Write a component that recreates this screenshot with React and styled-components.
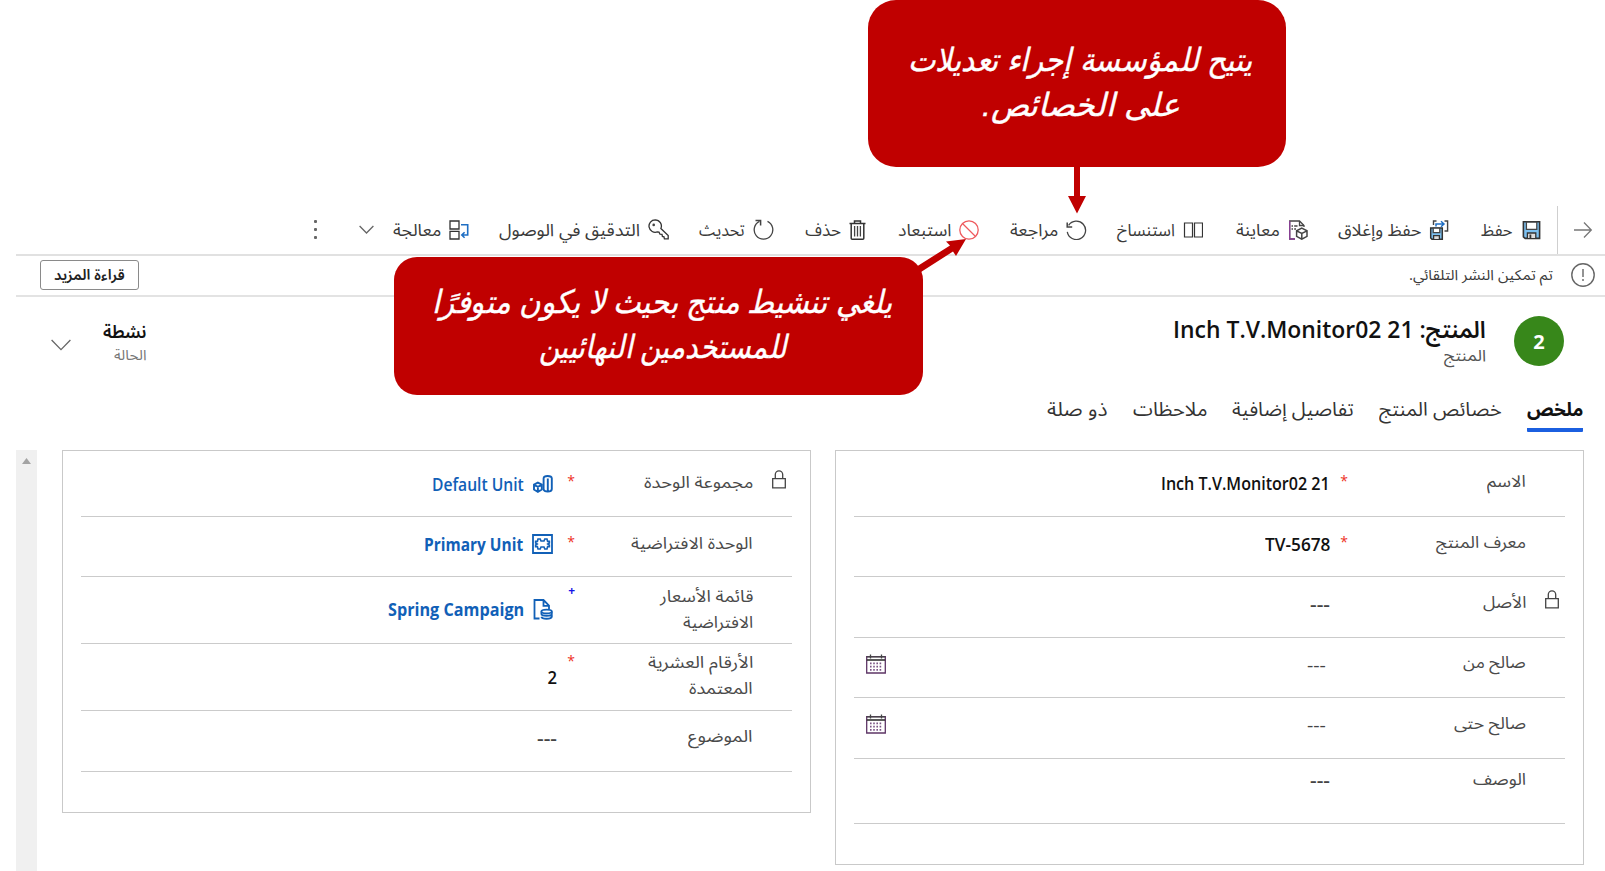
import React, { useLayoutEffect, useRef } from "react";
import styled, { createGlobalStyle } from "styled-components";

const ui = '"Open Sans", "Noto Sans Arabic", "DejaVu Sans Condensed", "DejaVu Sans", sans-serif';
const RED = "#c00000";
const BLUE = "#1160b7";

const Global = createGlobalStyle`
  *, *::before, *::after { box-sizing: border-box; }
  html, body { margin: 0; background: #fff; overflow: hidden; }
  body { font-family: ${ui}; color: #333; }
`;

/* A line of text squeezed or stretched to the width of its slot. */
const FitBox = styled.span`
  display: block;
  flex: none;
  width: ${(p) => p.$w}px;
  height: ${(p) => p.$lh}px;
  line-height: ${(p) => p.$lh}px;
  white-space: nowrap;
  direction: rtl;
`;
const FitInner = styled.span`
  display: inline-block;
  transform-origin: right center;
`;
function Fit({ w, lh = 24, children }) {
  const ref = useRef(null);
  useLayoutEffect(() => {
    const el = ref.current;
    el.style.transform = `scaleX(${w / el.offsetWidth})`;
  }, [w, children]);
  return (
    <FitBox $w={w} $lh={lh}>
      <FitInner ref={ref}>{children}</FitInner>
    </FitBox>
  );
}

const Page = styled.div`
  position: relative;
  direction: rtl;
  width: 1605px;
  height: 871px;
  padding: 206px 0 0 16px;
  overflow: hidden;
  display: flex;
  flex-direction: column;
`;

const Toolbar = styled.div`
  height: 50px;
  flex: none;
  display: flex;
  border-bottom: 2px solid #e1e1e1;
`;
const BackSlot = styled.div`
  width: 48px;
  display: flex;
  align-items: center;
  padding-right: 12px;
  border-left: 1px solid #cfcfcf;
  margin-left: 16px;
`;
const Command = styled.div`
  width: ${(p) => p.$w}px;
  flex: none;
  display: flex;
  align-items: center;
  gap: 8px;
  padding-bottom: 1px;
  font-size: 17px;
  color: #3a3a3a;
`;
const Chevron = styled.div`
  margin-right: 9px;
  display: flex;
`;
const More = styled.div`
  display: flex;
  flex-direction: column;
  justify-content: center;
  gap: 5px;
  padding: 0 1px 2px 0;
`;
const Dot = styled.i`
  width: 3px;
  height: 3px;
  border-radius: 1px;
  background: #666;
`;

const Notice = styled.div`
  height: 41px;
  flex: none;
  display: flex;
  align-items: center;
  padding: 0 10px 2px 24px;
  border-bottom: 2px solid #e3e3e3;
  font-size: 14.5px;
  color: #3a3a3a;
`;
const NoticeText = styled.div`
  margin-right: 18px;
`;
const ReadMore = styled.button`
  margin: 0 auto 0 0;
  width: 99px;
  height: 30px;
  padding: 0 0 0 1px;
  display: flex;
  align-items: center;
  justify-content: center;
  border: 1px solid #8a8a8a;
  border-radius: 3px;
  background: #fff;
  font: 600 14.5px ${ui};
  color: #222;
`;

const Header = styled.div`
  height: 98px;
  flex: none;
  display: flex;
  align-items: flex-start;
  padding: 19px 41px 0 35px;
`;
const Avatar = styled.div`
  width: 50px;
  height: 50px;
  border-radius: 50%;
  background: #37871a;
  color: #fff;
  font-size: 20px;
  font-weight: 700;
  display: flex;
  align-items: center;
  justify-content: center;
`;
const Heading = styled.div`
  margin-right: 28px;
`;
const Title = styled.div`
  margin-top: -1px;
  font-size: 23.5px;
  font-weight: 600;
  color: #111;
`;
const Sub = styled.div`
  font-size: 16px;
  color: #555;
`;
const Status = styled.div`
  margin-right: auto;
  display: flex;
  align-items: flex-start;
  gap: 32px;
`;
const StatusText = styled.div`
  display: flex;
  flex-direction: column;
`;
const StatusValue = styled.div`
  font-size: 18px;
  font-weight: 600;
  color: #111;
`;
const StatusLabel = styled.div`
  display: flex;
  font-size: 14.5px;
  color: #777;
`;
const StatusChevron = styled.div`
  padding-top: 23px;
`;

const Tabs = styled.div`
  height: 55px;
  flex: none;
  display: flex;
  align-items: flex-start;
  gap: 25px;
  padding-right: 22px;
`;
const Tab = styled.div`
  height: 37px;
  font-size: 19px;
  font-weight: ${(p) => (p.$on ? 700 : 400)};
  color: ${(p) => (p.$on ? "#111" : "#333")};
  border-bottom: 4px solid ${(p) => (p.$on ? "#1b5fe0" : "transparent")};
  border-radius: 1px;
`;

const Body = styled.div`
  flex: 1;
  min-height: 0;
  display: flex;
  align-items: flex-start;
  padding-right: 21px;
`;
const Panel = styled.div`
  width: ${(p) => p.$w}px;
  height: ${(p) => p.$h}px;
  flex: none;
  margin-left: ${(p) => p.$ml}px;
  padding: 1px 18px;
  border: 1px solid #c9c9c9;
`;
const Row = styled.div`
  height: ${(p) => p.$h}px;
  display: flex;
  align-items: flex-start;
  border-bottom: 1px solid #cbcbcb;
`;
const LockSlot = styled.div`
  width: 39px;
  flex: none;
  padding: ${(p) => p.$top}px 6px 0 0;
`;
const LabelCell = styled.div`
  width: 178px;
  flex: none;
  padding-top: ${(p) => p.$top - 2}px;
  font-size: 16.5px;
  color: #4a4a4a;
`;
const Mark = styled.div`
  width: 8px;
  flex: none;
  padding-top: ${(p) => p.$top}px;
  font-size: ${(p) => (p.$blue ? 12 : 14)}px;
  font-weight: ${(p) => (p.$blue ? 700 : 400)};
  line-height: 16px;
  color: ${(p) => (p.$blue ? "#1515e8" : "#ee3124")};
`;
const ValueCell = styled.div`
  flex: 1;
  display: flex;
  align-items: center;
  height: 24px;
  margin-top: ${(p) => p.$top - 1}px;
  margin-right: ${(p) => p.$mr}px;
  gap: 9px;
  font-size: 17.5px;
  font-weight: ${(p) => p.$weight || 600};
  color: ${(p) => (p.$link ? BLUE : p.$dash ? "#444" : "#111")};
`;
const End = styled.div`
  margin-right: auto;
  margin-left: 12px;
  padding-bottom: 2px;
  display: flex;
`;
const Scroll = styled.div`
  width: 21px;
  align-self: stretch;
  margin-right: auto;
  background: #f0f0f0;
  display: flex;
  justify-content: center;
  padding-top: 8px;
`;

const Callout = styled.div`
  position: absolute;
  left: ${(p) => p.$x}px;
  top: ${(p) => p.$y}px;
  width: ${(p) => p.$w}px;
  height: ${(p) => p.$h}px;
  padding: ${(p) => p.$pt}px 0 0 ${(p) => p.$pl}px;
  border-radius: ${(p) => p.$r}px;
  background: ${RED};
  color: #fff;
  font: italic 32px "Liberation Sans", "DejaVu Sans", sans-serif;
  -webkit-text-stroke: 0.4px #fff;
  display: flex;
  flex-direction: column;
  align-items: center;
`;
const Arrow = styled.svg`
  position: absolute;
  left: ${(p) => p.$x}px;
  top: ${(p) => p.$y}px;
`;

const IconSvg = styled.svg`
  flex: none;
  display: block;
`;
const Svg = ({ w = 20, h = 20, children, s = "#444", sw = 1.3 }) => (
  <IconSvg width={w} height={h} viewBox={`0 0 ${w} ${h}`} fill="none" stroke={s} strokeWidth={sw}>
    {children}
  </IconSvg>
);

const Icons = {
  save: (
    <Svg>
      <path d="M2.4 1.8H18.6V18.4H4.2L2.4 16.8Z" fill="#7cc0f0" stroke="#333" strokeWidth="1.6" />
      <path d="M5.4 2.2H15.8V9.4H5.4Z" fill="#fff" stroke="#444" />
      <path d="M6.4 18V13H14.8V18" fill="#ddd" stroke="#333" />
      <path d="M9.4 14.5V18" stroke="#333" strokeWidth="1.8" />
    </Svg>
  ),
  saveClose: (
    <Svg>
      <path d="M1.7 8H13.3V19.3H3L1.7 18Z" fill="#7cc0f0" stroke="#333" strokeWidth="1.5" />
      <path d="M4.2 8.2H10.8V12.6H4.2Z" fill="#fff" stroke="#444" />
      <path d="M4.6 19V15.6H10.4V19" fill="#ddd" stroke="#333" />
      <path d="M4.5 5V1H7.5M15.5 1H18.6V11H15.5" stroke="#444" strokeWidth="1.4" />
      <path d="M7 6.6V4H15M12 1.2L15 4L12 6.8" stroke="#1f6fc4" strokeWidth="1.5" />
    </Svg>
  ),
  preview: (
    <Svg>
      <path d="M7 19H1.7V1H11.5L16 5.5V7" stroke="#444" />
      <path d="M1.7 1V19H7" stroke="#8a3f96" />
      <path d="M11.5 1V5.5H16" />
      <path d="M3.5 6H5M6.2 6H9.5M3.5 9H5M6.2 9H8" />
      <path d="M13.8 8.2L19 10.8V16.4L13.8 19.2L8.6 16.4V10.8ZM8.6 10.8L13.8 13.5L19 10.8M13.8 13.5V19" strokeWidth="1.5" />
    </Svg>
  ),
  clone: (
    <Svg>
      <path d="M1.5 3H9.5V17H1.5ZM11.5 3H19.5V17H11.5Z" stroke="#333" strokeWidth="1.2" />
    </Svg>
  ),
  revise: (
    <Svg w={21}>
      <path d="M1.3 11.8A9.2 9.2 0 1 0 2.6 5.4" />
      <path d="M1.2 2.6V7H6.2" strokeWidth="1.5" />
    </Svg>
  ),
  retire: (
    <Svg s="#ee5a5e">
      <circle cx="10" cy="10" r="9.2" />
      <path d="M3.5 3.5L16.5 16.5" />
    </Svg>
  ),
  trash: (
    <Svg w={17}>
      <path d="M.5 3.4H16.5M5.5 3V.9H11.5V3M2.2 3.6V18.3Q2.2 19.2 3.1 19.2H13.9Q14.8 19.2 14.8 18.3V3.6" strokeWidth="1.5" stroke="#333" />
      <path d="M5.6 6V16.5M8.5 6V16.5M11.4 6V16.5" />
    </Svg>
  ),
  refresh: (
    <Svg w={21} h={21}>
      <path d="M14.5 2.4A9.3 9.3 0 1 1 6.5 2.4" />
      <path d="M2.5 1.5H7.6V6.6" strokeWidth="1.5" />
    </Svg>
  ),
  key: (
    <Svg w={21} h={21}>
      <path d="M7.2 .9A6.2 6.2 0 1 0 9.4 12.9L11 13.2L12 15.2L14 15.4L14.4 17.4L16 17.8L16.4 19.8H20.2V16.6L12.9 9.5A6.2 6.2 0 0 0 7.2 .9Z" stroke="#333" />
      <circle cx="5.7" cy="5.9" r="1.3" fill="#444" stroke="none" />
    </Svg>
  ),
  process: (
    <Svg>
      <path d="M1 1H10V9H1ZM1 11.4H10V19H1Z" stroke="#333" />
      <path d="M12 4.8H18.7V15H13.2M15.6 12.2L12.8 15L15.6 17.8" stroke="#1f6fc4" strokeWidth="1.6" />
    </Svg>
  ),
  lock: (
    <Svg w={14} h={19}>
      <path d="M.7 8.6H13.3V17.8H.7ZM3.3 8.6V4.6A3.7 3.7 0 0 1 10.7 4.6V8.6" />
    </Svg>
  ),
  calendar: (
    <Svg h={20}>
      <path d="M.7 2.6H19.3V19H.7Z" stroke="#5d3566" />
      <path d="M.7 6H19.3" stroke="#333" strokeWidth="1.6" />
      <path d="M.7 2.8H19.3M4.5 .4V4.6M15.5 .4V4.6" stroke="#444" />
      <path d="M4 9.3H16.5M4 12.6H16.5M4 15.8H16.5" stroke="#7b5585" strokeWidth="1.8" strokeDasharray="1.6 1.6" />
    </Svg>
  ),
  unitGroup: (
    <Svg s={BLUE} sw={1.9} h={18}>
      <path d="M10.6 3.4Q10.6 1 14.6 1T18.8 3.4V14.2Q18.6 16.6 14.8 16.6T10.6 14.4ZM14.8 3.6V16" />
      <path d="M1 9.6L4.9 7.6L8.8 9.6V14.5L4.9 16.8L1 14.5ZM1 9.8L4.9 11.8L8.8 9.8M4.9 11.8V16" />
    </Svg>
  ),
  unit: (
    <Svg w={21} h={20} s={BLUE} sw={1.8}>
      <path d="M1 1H20V19H1Z" />
      <path d="M6 5H8.2L9 7H12L12.8 5H15L15.6 7.4H17.4V9L15.8 10L17.4 11V12.6H15.6L15 15H12.8L12 13H9L8.2 15H6L5.4 12.6H3.6V11L5.2 10L3.6 9V7.4H5.4Z" strokeWidth="1.6" />
    </Svg>
  ),
  priceList: (
    <Svg h={21} s={BLUE} sw={1.8}>
      <path d="M6.5 19.5H1.5V1H10.5L16 6.5V10M10.5 1V6.8H16" />
      <ellipse cx="13.6" cy="12.5" rx="5.2" ry="1.9" />
      <path d="M8.4 12.5V15C8.4 17.3 18.8 17.3 18.8 15V12.5M8.4 17.8C9 20.4 18.2 20.4 18.8 17.8V15.5" />
    </Svg>
  ),
};

const commands = [
  ["save", "حفظ", 32, 92],
  ["saveClose", "حفظ وإغلاق", 83, 141],
  ["preview", "معاينة", 44, 105],
  ["clone", "استنساخ", 58, 116],
  ["revise", "مراجعة", 48, 108],
  ["retire", "استبعاد", 53, 113],
  ["trash", "حذف", 36, 92],
  ["refresh", "تحديث", 46, 105],
  ["key", "التدقيق في الوصول", 141, 200],
  ["process", "معالجة", 48, 86],
];

const tabs = [
  ["ملخص", 56],
  ["خصائص المنتج", 123],
  ["تفاصيل إضافية", 122],
  ["ملاحظات", 74],
  ["ذو صلة", 61],
];

const mainRows = [
  { h: 65, label: [["الاسم", 39]], lt: 18, req: 1, mt: 21, value: "21 Inch T.V.Monitor02", vw: 169, vt: 20 },
  { h: 60, label: [["معرف المنتج", 90]], lt: 14, req: 1, mt: 17, value: "TV-5678", vw: 65, vt: 16 },
  { h: 61, label: [["الأصل", 43]], lt: 14, lock: 1, kt: 13, value: "---", vw: 20, vt: 16 },
  { h: 60, label: [["صالح من", 63]], lt: 13, value: "---", vw: 19, vt: 16, weight: 400, cal: 1 },
  { h: 61, label: [["صالح حتى", 72]], lt: 14, value: "---", vw: 19, vt: 16, weight: 400, cal: 1 },
  { h: 65, label: [["الوصف", 53]], lt: 9, value: "---", vw: 20, vt: 10 },
];
const sideRows = [
  { h: 65, label: [["مجموعة الوحدة", 109]], lt: 19, lock: 1, kt: 18, req: 1, mt: 21, icon: "unitGroup", value: "Default Unit", vw: 92, vt: 21, link: 1 },
  { h: 60, label: [["الوحدة الافتراضية", 122]], lt: 15, req: 1, mt: 17, icon: "unit", value: "Primary Unit", vw: 99, vt: 16, link: 1, weight: 700 },
  { h: 67, label: [["قائمة الأسعار", 93], ["الافتراضية", 70]], lt: 8, plus: 1, mt: 6, icon: "priceList", value: "Spring Campaign", vw: 136, vt: 21, link: 1, weight: 700 },
  { h: 67, label: [["الأرقام العشرية", 105], ["المعتمدة", 64]], lt: 7, req: 1, mt: 9, value: "2", vw: 9.5, vt: 22 },
  { h: 61, label: [["الموضوع", 65]], lt: 14, value: "---", vw: 20, vt: 16 },
];

function Field({ row }) {
  return (
    <Row $h={row.h}>
      <LockSlot $top={row.kt || 0}>{row.lock ? Icons.lock : null}</LockSlot>
      <LabelCell $top={row.lt}>
        {row.label.map(([t, w]) => (
          <Fit key={t} w={w} lh={26}>{t}</Fit>
        ))}
      </LabelCell>
      <Mark $top={row.mt || 0} $blue={row.plus}>{row.req ? "*" : row.plus ? "+" : ""}</Mark>
      <ValueCell
        $top={row.vt}
        $mr={row.icon || row.cal ? 14 : 10}
        $link={row.link}
        $weight={row.weight}
        $dash={row.value === "---"}
      >
        {row.icon && Icons[row.icon]}
        <Fit w={row.vw}>{row.value}</Fit>
        {row.cal && <End>{Icons.calendar}</End>}
      </ValueCell>
    </Row>
  );
}

export default function App() {
  return (
    <Page>
      <Global />
      <Toolbar>
        <BackSlot>
          <Svg w={20} s="#777"><path d="M1 10H18M11 2.5L18.3 10L11 17.5" /></Svg>
        </BackSlot>
        {commands.map(([icon, label, w, pitch]) => (
          <Command key={icon} $w={pitch}>
            {Icons[icon]}
            <Fit w={w}>{label}</Fit>
          </Command>
        ))}
        <Chevron>
          <Command $w={56}>
            <Svg w={15} h={9} s="#666"><path d="M.6 1L7.5 8L14.4 1" /></Svg>
          </Command>
        </Chevron>
        <More><Dot /><Dot /><Dot /></More>
      </Toolbar>

      <Notice>
        <Svg w={24} h={24} s="#666" sw={1.4}>
          <circle cx="12" cy="12" r="11.2" />
          <path d="M12 6V14M12 16V18" />
        </Svg>
        <NoticeText><Fit w={144}>تم تمكين النشر التلقائي.</Fit></NoticeText>
        <ReadMore><Fit w={71}>قراءة المزيد</Fit></ReadMore>
      </Notice>

      <Header>
        <Avatar>2</Avatar>
        <Heading>
          <Title><Fit w={313} lh={28}>المنتج: 21 Inch T.V.Monitor02</Fit></Title>
          <Sub><Fit w={42} lh={24}>المنتج</Fit></Sub>
        </Heading>
        <Status>
          <StatusText>
            <StatusValue><Fit w={43} lh={30}>نشطة</Fit></StatusValue>
            <StatusLabel><Fit w={33} lh={17}>الحالة</Fit></StatusLabel>
          </StatusText>
          <StatusChevron>
            <Svg w={20} h={12} s="#666"><path d="M.6 1L10 10.6L19.4 1" /></Svg>
          </StatusChevron>
        </Status>
      </Header>

      <Tabs>
        {tabs.map(([t, w], i) => (
          <Tab key={t} $on={i === 0}><Fit w={w} lh={28}>{t}</Fit></Tab>
        ))}
      </Tabs>

      <Body>
        <Panel $w={749} $h={415} $ml={24}>
          {mainRows.map((r) => <Field key={r.label[0][0]} row={r} />)}
        </Panel>
        <Panel $w={749} $h={363} $ml={0}>
          {sideRows.map((r) => <Field key={r.label[0][0]} row={r} />)}
        </Panel>
        <Scroll>
          <svg width="9" height="6"><path d="M0 6L4.5 0L9 6Z" fill="#a3a3a3" /></svg>
        </Scroll>
      </Body>

      <Callout $x={868} $y={0} $w={418} $h={167} $r={28} $pt={38} $pl={7}>
        <Fit w={345} lh={45}>يتيح للمؤسسة إجراء تعديلات</Fit>
        <Fit w={198} lh={45}>على الخصائص.</Fit>
      </Callout>
      <Arrow $x={1066} $y={165} width="22" height="50">
        <path d="M8 0H14V31H20L11 48.5L2 31H8Z" fill={RED} />
      </Arrow>
      <Callout $x={394} $y={257} $w={529} $h={138} $r={23} $pt={23} $pl={8}>
        <Fit w={460} lh={45}>يلغي تنشيط منتج بحيث لا يكون متوفرًا</Fit>
        <Fit w={248} lh={45}>للمستخدمين النهائيين</Fit>
      </Callout>
      <Arrow $x={910} $y={234} width="60" height="40">
        <path d="M6 33L40 11.5L36 7.5L56 5L46 22L43 17.5L11 38Z" fill={RED} />
      </Arrow>
    </Page>
  );
}
